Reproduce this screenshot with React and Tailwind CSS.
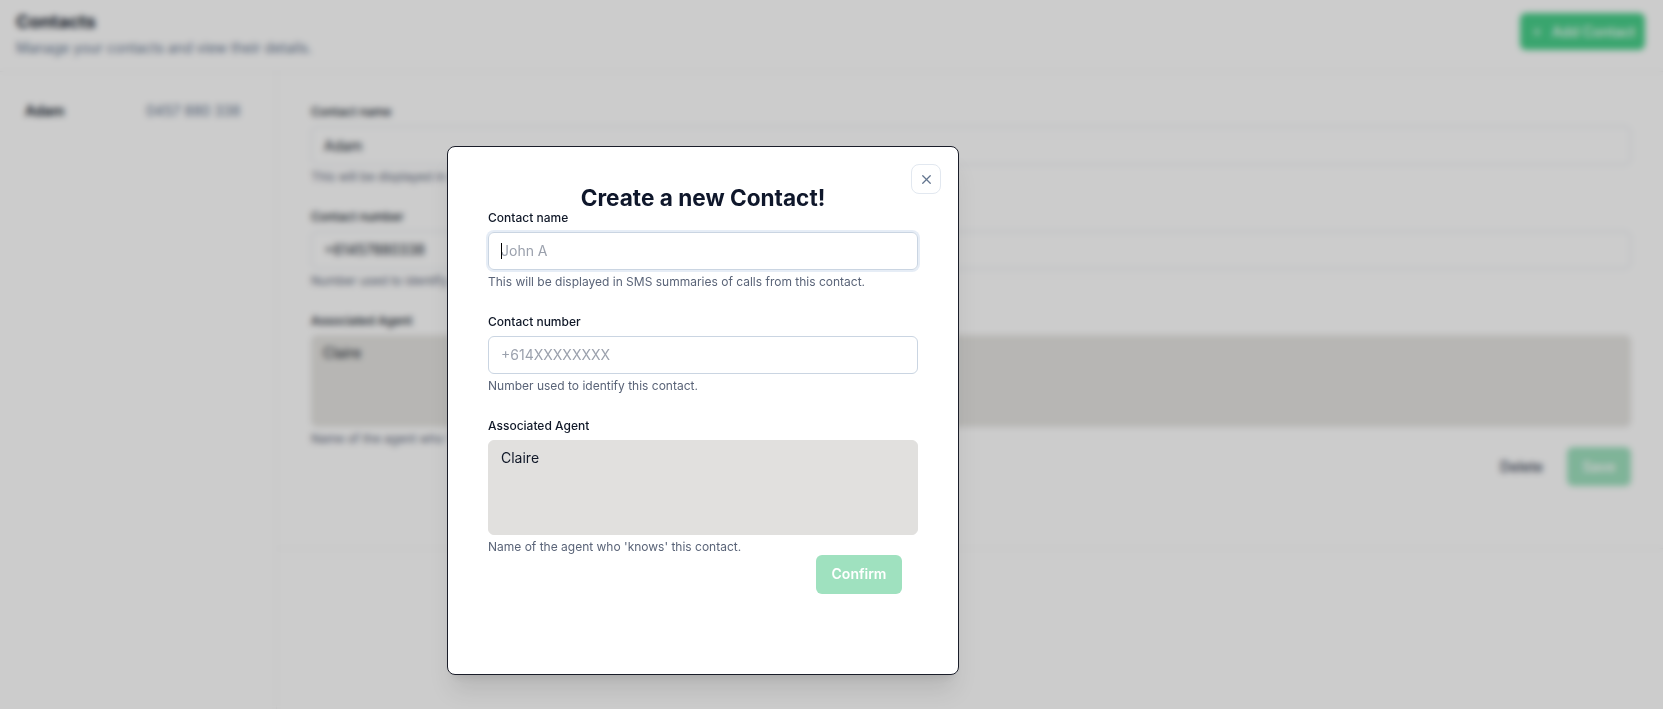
import React from 'react';
import { Plus, X } from 'lucide-react';

const Field = ({ label, help, children }) => (
  <div className="flex flex-col">
    <label className="text-xs font-medium leading-4 text-gray-900">{label}</label>
    <div className="mt-[6px]">{children}</div>
    <p className="mt-1 text-xs leading-4 text-[#5a6478]">{help}</p>
  </div>
);

const ContactsPage = () => (
  <div className="flex h-full flex-col bg-white">
    {/* Header */}
    <div className="flex h-[72px] shrink-0 items-start justify-between border-b border-gray-100 pl-4 pr-[18px]">
      <div className="pt-[9px]">
        <h1 className="text-lg font-bold leading-[26px] text-gray-900">Contacts</h1>
        <p className="mt-[3px] text-sm leading-5 text-slate-500">Manage your contacts and view their details.</p>
      </div>
      <button className="mt-[13px] flex h-[37px] w-[125px] items-center justify-center gap-2 rounded-md bg-[#48cf8a] text-sm font-medium text-white">
        <Plus size={14} />
        Add Contact
      </button>
    </div>

    <div className="flex flex-1">
      {/* Contact list */}
      <div className="w-[277px] shrink-0 border-r border-gray-100 px-[25px] pt-[29px]">
        <div className="flex text-sm leading-5">
          <span className="w-[121px] font-semibold text-gray-900">Adam</span>
          <span className="text-slate-500">0457 880 338</span>
        </div>
      </div>

      {/* Details */}
      <div className="flex-1">
        <div className="flex flex-col gap-6 border-b border-gray-100 pb-[62px] pl-[34px] pr-8 pt-8">
          <Field label="Contact name" help="This will be displayed in SMS summaries of calls from this contact.">
            <div className="flex h-[39px] items-center rounded-md border border-slate-200 px-3 text-sm text-gray-900">Adam</div>
          </Field>
          <Field label="Contact number" help="Number used to identify this contact.">
            <div className="flex h-[38px] items-center rounded-md border border-slate-200 px-3 text-sm text-gray-900">+61457880338</div>
          </Field>
          <div className="flex flex-col">
            <Field label="Associated Agent" help="Name of the agent who 'knows' this contact.">
              <div className="h-[92px] rounded-md bg-[#e5e4e1] px-3 py-2 text-sm text-gray-900">Claire</div>
            </Field>
            <div className="flex items-center justify-end gap-6">
              <span className="text-sm font-medium text-gray-700">Delete</span>
              <button className="h-[39px] w-16 rounded-md bg-[#9fe1bf] text-sm font-semibold text-white">Save</button>
            </div>
          </div>
        </div>
      </div>
    </div>
  </div>
);

const CreateContactDialog = () => (
  <div className="absolute left-[447px] top-[146px] flex h-[529px] w-[512px] flex-col rounded-lg border border-[#1a1d29] bg-white px-10 shadow-xl">
    <button className="absolute right-[17px] top-[17px] flex h-[30px] w-[30px] items-center justify-center rounded-lg border border-slate-200 text-slate-500">
      <X size={15} strokeWidth={2} />
    </button>

    <h2 className="pt-[40px] text-center text-[22.6px] font-bold leading-none text-slate-900">Create a new Contact!</h2>

    <div className="flex flex-col gap-6">
      <Field label="Contact name" help="This will be displayed in SMS summaries of calls from this contact.">
        <div className="relative">
          <input
            className="h-[38px] w-full rounded-md border border-slate-300 px-3 text-sm text-gray-900 outline-none ring-2 ring-[#e6edf6] placeholder:text-[#9ba1ad]"
            placeholder="John A"
          />
          <span className="absolute left-[13px] top-[11px] h-4 w-px bg-black" />
        </div>
      </Field>

      <Field label="Contact number" help="Number used to identify this contact.">
        <input
          className="h-[38px] w-full rounded-md border border-slate-300 px-3 text-sm text-gray-900 outline-none placeholder:text-[#9ba1ad]"
          placeholder="+614XXXXXXXX"
        />
      </Field>

      <div className="flex flex-col">
        <Field label="Associated Agent" help="Name of the agent who 'knows' this contact.">
          <textarea
            className="block h-[95px] w-full resize-none rounded-md border border-[#e1e0de] bg-[#e1e0de] px-3 py-[5px] text-sm leading-6 text-gray-900 outline-none"
            defaultValue="Claire"
            disabled
          />
        </Field>
        <div className="flex justify-end pr-4">
          <button className="h-[39px] w-[86px] rounded-md bg-[#9fe1bf] text-sm font-semibold text-white">Confirm</button>
        </div>
      </div>
    </div>
  </div>
);

export default function App() {
  return (
    <div className="relative h-[709px] w-full overflow-hidden font-['Inter',sans-serif]">
      <ContactsPage />
      <div className="absolute inset-0 bg-black/20 backdrop-blur-[3px]" />
      <CreateContactDialog />
    </div>
  );
}
